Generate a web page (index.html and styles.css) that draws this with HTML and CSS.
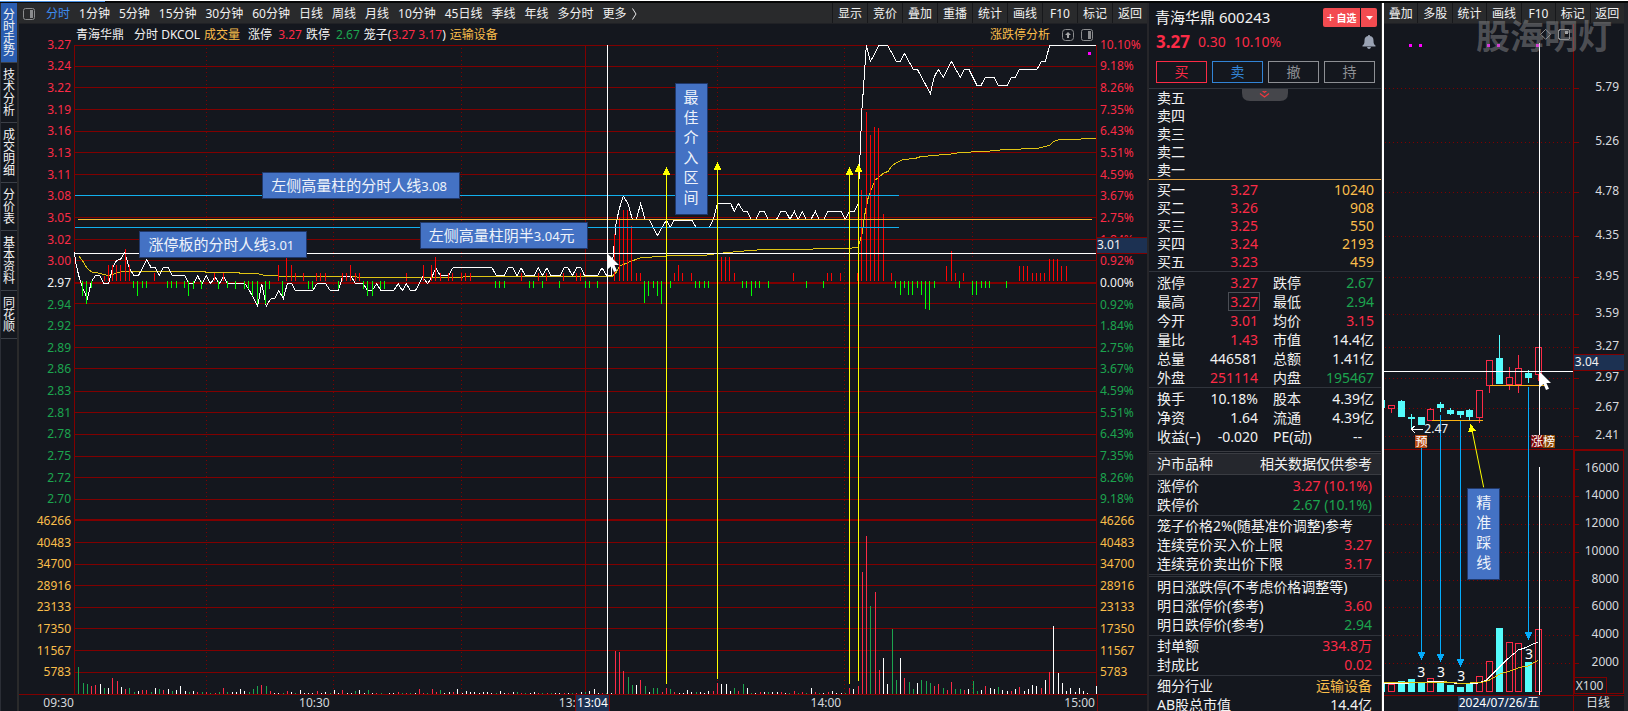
FILE: index.html
```html
<!DOCTYPE html>
<html lang="zh-CN">
<head>
<meta charset="utf-8">
<title>青海华鼎 600243 分时走势</title>
<link rel="stylesheet" href="styles.css">
</head>
<body>
<div class="top-strip"><span class="top-strip-active"></span></div>
<div class="workspace">
  <nav class="side-tabs">
    <button class="side-tab active">分时走势</button>
    <button class="side-tab">技术分析</button>
    <button class="side-tab">成交明细</button>
    <button class="side-tab">分价表</button>
    <button class="side-tab">基本资料</button>
    <button class="side-tab">同花顺</button>
  </nav>

  <main class="intraday">
    <div class="toolbar">
      <div class="periods">
        <button class="period icon-btn" aria-label="侧栏"><svg width="12" height="12" viewBox="0 0 12 12"><rect x=".5" y=".5" width="11" height="11" rx="2" fill="none" stroke="#8b8c8e"/><rect x="7" y="2" width="3" height="8" fill="#8b8c8e"/></svg></button>
        <button class="period selected">分时</button>
        <button class="period">1分钟</button>
        <button class="period">5分钟</button>
        <button class="period">15分钟</button>
        <button class="period">30分钟</button>
        <button class="period">60分钟</button>
        <button class="period">日线</button>
        <button class="period">周线</button>
        <button class="period">月线</button>
        <button class="period">10分钟</button>
        <button class="period">45日线</button>
        <button class="period">季线</button>
        <button class="period">年线</button>
        <button class="period">多分时</button>
        <button class="period more">更多<svg width="5" height="12" viewBox="0 0 5 12"><path d="M.5.5 4 6 .5 11.5" fill="none" stroke="#e8e8e8"/></svg></button>
      </div>
      <div class="tools">
        <button class="tool">显示</button><button class="tool">竞价</button><button class="tool">叠加</button><button class="tool">重播</button><button class="tool">统计</button><button class="tool">画线</button><button class="tool">F10</button><button class="tool">标记</button><button class="tool">返回</button>
      </div>
    </div>
    <div class="legend">
      <span class="legend-name">青海华鼎</span><span>分时 DKCOL</span><span class="gold legend-vol">成交量</span>
      <span>涨停</span><span class="up legend-num">3.27</span><span>跌停</span><span class="down legend-num">2.67</span>
      <span>笼子(<span class="up">3.27 3.17</span>)</span><span class="gold">运输设备</span>
      <span class="legend-right">
        <a class="gold" href="#">涨跌停分析</a>
        <svg width="12" height="12" viewBox="0 0 12 12"><rect x=".5" y=".5" width="11" height="11" rx="3" fill="none" stroke="#8b8c8e"/><path d="M6 3 9 6H7v3H5V6H3z" fill="#a5a6a8"/></svg>
        <svg width="12" height="12" viewBox="0 0 12 12"><rect x=".5" y=".5" width="11" height="11" rx="2" fill="none" stroke="#8b8c8e"/><rect x="7" y="2" width="3" height="8" fill="#8b8c8e"/></svg>
      </span>
    </div>
    <div class="chart-row">
      <div class="axis axis-left" id="axisLeft"></div>
      <div class="plot">
        <svg class="plot-svg" id="plot" viewBox="222 135 3069 1947" preserveAspectRatio="none"></svg>
        <div class="note note-high">左侧高量柱的分时人线<span class="num">3.08</span></div>
        <div class="note note-half">左侧高量柱阴半<span class="num">3.04</span>元</div>
        <div class="note note-limit">涨停板的分时人线<span class="num">3.01</span></div>
        <div class="note note-tall note-zone">最佳介入区间</div>
        <svg class="cursor cursor-main" width="12" height="18" viewBox="0 0 12 18"><path d="M0 0v15l3.5-3 2.5 6 3-1.2-2.600-5.800H11z" fill="#fff"/></svg>
      </div>
      <div class="axis axis-right" id="axisRight"><span class="marker">3.01</span></div>
    </div>
    <div class="time-axis">
      <span>09:30</span><span>10:30</span><span class="time-noon">13:00</span><span>14:00</span><span class="time-close">15:00</span><span class="time-end"></span>
      <span class="time-marker">13:04</span>
    </div>
  </main>

  <aside class="quote">
    <header class="quote-head">
      <h1 class="quote-name">青海华鼎 600243</h1>
      <div class="fav"><button class="fav-add"><span class="fav-plus">+</span>自选</button><button class="fav-menu" aria-label="自选菜单"><svg width="7" height="4" viewBox="0 0 7 4"><path d="M0 0h7L3.500 4z" fill="#fff"/></svg></button></div>
    </header>
    <div class="quote-price up"><strong>3.27</strong><span>0.30</span><span>10.10%</span>
      <svg class="bell" width="14" height="14" viewBox="0 0 14 14"><path d="M7 0c.8 0 1 .5 1 1 2.500.6 3.500 2 3.500 4.500 0 3 .5 4 2 5v1H.5v-1c1.500-1 2-2 2-5C2.500 3 3.500 1.600 6 1c0-.5.2-1 1-1zM5 12h4c-.3 1.300-1 2-2 2s-1.700-.7-2-2z" fill="#9aa3b4"/></svg>
    </div>
    <div class="trade">
      <button class="trade-btn buy">买</button><button class="trade-btn sell">卖</button><button class="trade-btn">撤</button><button class="trade-btn">持</button>
    </div>
    <div class="book asks">
      <svg class="fold" width="46" height="12" viewBox="0 0 46 12"><path d="M0 0h46v4q0 8-8 8H8Q0 12 0 4z" fill="#45464b"/><path d="M20.500 2.500h1l1 1 1-1h1M18 4.500l4.500 3.500L27 4.500" fill="none" stroke="#f0383f" stroke-width="1.200"/></svg>
      <div class="row">卖五</div><div class="row">卖四</div><div class="row">卖三</div><div class="row">卖二</div><div class="row">卖一</div>
    </div>
    <div class="book bids">
      <div class="row"><span>买一</span><span class="up">3.27</span><span></span><span class="gold">10240</span></div>
      <div class="row"><span>买二</span><span class="up">3.26</span><span></span><span class="gold">908</span></div>
      <div class="row"><span>买三</span><span class="up">3.25</span><span></span><span class="gold">550</span></div>
      <div class="row"><span>买四</span><span class="up">3.24</span><span></span><span class="gold">2193</span></div>
      <div class="row"><span>买五</span><span class="up">3.23</span><span></span><span class="gold">459</span></div>
    </div>
    <div class="stats">
      <div class="row"><span>涨停</span><span class="up">3.27</span><span>跌停</span><span class="down">2.67</span></div>
      <div class="row"><span>最高</span><span class="up"><span class="boxed">3.27</span></span><span>最低</span><span class="down">2.94</span></div>
      <div class="row"><span>今开</span><span class="up">3.01</span><span>均价</span><span class="up">3.15</span></div>
      <div class="row"><span>量比</span><span class="up">1.43</span><span>市值</span><span>14.4亿</span></div>
      <div class="row"><span>总量</span><span>446581</span><span>总额</span><span>1.41亿</span></div>
      <div class="row"><span>外盘</span><span class="up">251114</span><span>内盘</span><span class="down">195467</span></div>
    </div>
    <div class="stats stats-b">
      <div class="row"><span>换手</span><span>10.18%</span><span>股本</span><span>4.39亿</span></div>
      <div class="row"><span>净资</span><span>1.64</span><span>流通</span><span>4.39亿</span></div>
      <div class="row"><span>收益(–)</span><span>-0.020</span><span>PE(动)</span><span class="dash">--</span></div>
    </div>
    <div class="pair section-title"><span>沪市品种</span><span>相关数据仅供参考</span></div>
    <div class="group">
      <div class="pair"><span>涨停价</span><span class="up">3.27 (10.1%)</span></div>
      <div class="pair"><span>跌停价</span><span class="down">2.67 (10.1%)</span></div>
    </div>
    <div class="group tight">
      <div class="pair"><span>笼子价格2%(随基准价调整)参考</span></div>
      <div class="pair"><span>连续竞价买入价上限</span><span class="up">3.27</span></div>
      <div class="pair"><span>连续竞价卖出价下限</span><span class="up">3.17</span></div>
    </div>
    <div class="group doubled tight">
      <div class="pair"><span>明日涨跌停(不考虑价格调整等)</span></div>
      <div class="pair"><span>明日涨停价(参考)</span><span class="up">3.60</span></div>
      <div class="pair"><span>明日跌停价(参考)</span><span class="down">2.94</span></div>
    </div>
    <div class="group tight">
      <div class="pair"><span>封单额</span><span class="up">334.8万</span></div>
      <div class="pair"><span>封成比</span><span class="up">0.02</span></div>
    </div>
    <div class="group tight">
      <div class="pair"><span>细分行业</span><span class="gold">运输设备</span></div>
      <div class="pair"><span>AB股总市值</span><span>14.4亿</span></div>
    </div>
  </aside>

  <section class="daily">
    <div class="toolbar">
      <div class="tools tools-wide">
        <button class="tool">叠加</button><button class="tool">多股</button><button class="tool">统计</button><button class="tool">画线</button><button class="tool">F10</button><button class="tool">标记</button><button class="tool">返回</button>
      </div>
    </div>
    <div class="k-chart" id="kChart">
      <svg class="plot-svg" id="kPlot" viewBox="12 72 720 2013" preserveAspectRatio="none"></svg>
      <span class="k-marker">3.04</span>
      <span class="k-unit">X100</span>
      <span class="k-low">2.47</span>
      <span class="tag tag-pre">预</span>
      <span class="tag-pair"><span class="tag tag-rise">涨</span><span class="tag tag-list">榜</span></span>
      <div class="note note-tall note-line">精准踩线</div>
      <div class="watermark">股海明灯</div>
      <svg class="cursor cursor-daily" width="12" height="18" viewBox="0 0 12 18"><path d="M0 0v15l3.500-3 2.500 6 3-1.200-2.600-5.800H11z" fill="#fff"/></svg>
    </div>
    <div class="k-time"><span class="k-date">2024/07/26/五</span><span class="k-period">日线</span></div>
  </section>
</div>
<script src="charts.js"></script>
</body>
</html>
```
FILE: styles.css
```css
* { box-sizing: border-box; }
html, body { margin: 0; height: 100%; }
body {
  display: flex;
  flex-direction: column;
  background: #14171e;
  color: #f2f2f2;
  font: 12px/16px "Noto Sans", "Noto Sans CJK SC", sans-serif;
  overflow: hidden;
}
button { font: inherit; color: inherit; background: none; border: 0; padding: 0; margin: 0; white-space: nowrap; }
a { text-decoration: none; }
svg { display: block; }
.up { color: #fb2b46; }
.down { color: #1ca44e; }
.gold { color: #fabe4b; }

.top-strip { flex: none; height: 3px; background: #050606; border-top: 1px solid #fff; }
.top-strip-active { display: block; width: 105px; height: 1px; background: #4a90e2; }
.workspace { flex: 1; min-height: 0; display: flex; }

/* left tab strip */
.side-tabs { flex: none; width: 19px; display: flex; flex-direction: column; border-left: 1px solid #2b2e36; border-right: 2px solid #2a2a2b; }
.side-tab { width: 16px; padding: 6px 2px 5px; font-size: 12px; line-height: 12px; white-space: normal; word-break: break-all; border-bottom: 1px solid #3b3f47; }
.side-tab.active { background: #2a5db0; }

/* intraday */
.intraday { flex: 1; min-width: 0; display: flex; flex-direction: column; }
.toolbar { flex: none; height: 21px; display: flex; justify-content: space-between; background: #292a2c; border-bottom: 1px solid #202125; }
.periods { display: flex; align-items: center; gap: 9px; padding: 1px 0 0 4px; }
.period.selected { color: #3c8cf0; }
.period.icon-btn { margin-right: 2px; }
.period.more { display: flex; align-items: center; gap: 5px; }
.tools { display: flex; }
.tool { width: 35px; padding-top: 2px; border-left: 1px solid #17181b; }
.tools-wide { flex: 1; }
.tools-wide .tool { flex: 1; width: auto; }
.tools-wide .tool:first-child { border-left: 0; }

.legend { flex: none; height: 21px; display: flex; align-items: center; gap: 4px; padding: 0 54px 0 57px; white-space: nowrap; }
.legend-name { margin-right: 6px; }
.legend-vol { margin-right: 4px; }
.legend-num { margin-left: 2px; }
.legend-right { margin-left: auto; display: flex; align-items: center; gap: 7px; }
.legend-right a { margin-right: 5px; }

.chart-row { flex: 1; min-height: 0; display: flex; }
.axis { flex: none; display: flex; flex-direction: column; margin: -11px 0 12px; position: relative; }
.axis-left { width: 55px; text-align: right; padding-right: 3px; }
.axis-right { width: 50px; padding-left: 3px; }
.tick { flex: 1; min-height: 0; display: flex; align-items: center; }
.axis-left .tick { justify-content: flex-end; }
.flat { color: #f2f2f2; }
.marker { position: absolute; left: 0; right: 0; top: 31.300%; height: 17px; line-height: 14px; background: #1c3152; border: 1px solid #800000; border-left: 0; border-right: 0; }

.plot { flex: 1; min-width: 0; position: relative; }
.plot-svg { position: absolute; left: 0; top: 0; width: 100%; height: 100%; shape-rendering: crispEdges; }
.plot-svg * { vector-effect: non-scaling-stroke; }
.note { position: absolute; background: #4472c4; border: 1px solid #20386a; color: #eef2fa; font-size: 15px; line-height: 24px; padding: 0 12px 0 8px; white-space: nowrap; }
.num { font-size: 13px; }
.note-high { left: 18.400%; top: 19.600%; }
.note-half { left: 33.800%; top: 27.300%; }
.note-limit { left: 6.400%; top: 28.600%; }
.note-tall { width: 33px; padding: 3px 8px 7px; line-height: 20px; white-space: normal; word-break: break-all; }
.note-zone { left: 58.700%; top: 5.900%; }
.cursor { position: absolute; }
.cursor-main { left: 52.200%; top: 32.200%; }

.time-axis { flex: none; position: relative; height: 17px; line-height: 15px; display: grid; grid-template-columns: 55px repeat(4, 1fr) 50px; text-align: right; color: #d5d8dc; border-top: 1px solid #800000; margin-top: -1px; z-index: 1; }
.time-noon { margin-right: -4px; }
.time-close { padding-right: 2px; }
.time-end { border-left: 1px solid #800000; }
.time-marker { position: absolute; left: 49.300%; top: 0; padding: 0 1px; height: 17px; background: #1c3152; border-left: 1px solid #800000; border-right: 1px solid #800000; color: #fff; }

/* quote panel */
.quote { flex: none; width: 235px; border-left: 2px solid #26262a; border-right: 1px solid #333; overflow: hidden; font-size: 14px; line-height: 18px; }
.quote-head { display: flex; justify-content: space-between; padding: 5px 4px 0 6px; }
.quote-name { margin: 0; font-size: 15px; font-weight: 400; line-height: 18px; }
.fav { display: flex; gap: 1px; height: 19px; font-size: 10px; font-weight: 700; line-height: 18px; color: #fff; }
.fav-add { width: 37px; background: #f34b50; border-radius: 2px 0 0 2px; display: flex; align-items: center; justify-content: center; gap: 2px; }
.fav-plus { font-size: 14px; font-weight: 400; }
.fav-menu { width: 16px; background: #f34b50; border-radius: 0 2px 2px 0; display: flex; align-items: center; justify-content: center; }
.quote-price { display: flex; align-items: center; gap: 8px; height: 20px; margin: 5px 5px 9px 7px; }
.quote-price strong { font-size: 17px; }
.bell { margin-left: auto; }
.trade { display: flex; gap: 5px; padding: 0 6px 5px 7px; border-bottom: 1px solid #30343c; }
.trade-btn { flex: 1; height: 22px; line-height: 18px; border: 1px solid #8d8f94; color: #8d8f94; }
.trade-btn.buy { border-color: #fb2b46; color: #fb2b46; }
.trade-btn.sell { border-color: #3284d6; color: #3284d6; }
.row { display: grid; grid-template-columns: 46px 55px 42px 1fr; padding: 0 7px 0 8px; white-space: nowrap; }
.row > :nth-child(2), .row > :nth-child(4) { display: flex; justify-content: flex-end; }
.row > :nth-child(3) { margin-left: 15px; }
.asks { position: relative; height: 91px; border-bottom: 1px solid #e0a040; }
.fold { position: absolute; left: 93px; top: 0; }
.bids { padding: 1px 0 0; border-bottom: 1px solid #30343c; }
.stats { line-height: 19px; padding: 1px 0 0; border-bottom: 1px solid #30343c; }
.stats-b { padding-bottom: 5px; border-bottom: 3px double #3a3c42; }
.row > .dash { padding-right: 12px; }
.boxed { border: 1px solid #4a4d54; line-height: 17px; margin-right: -2px; padding: 0 1px; }
.pair { display: flex; justify-content: space-between; line-height: 19px; padding: 0 9px 0 8px; white-space: nowrap; }
.section-title { background: #25272d; border-bottom: 1px solid #3a3c42; line-height: 20px; }
.group { padding: 1px 0; border-bottom: 1px solid #30343c; }
.group.tight { padding: 0 0 1px; }
.group.doubled { border-top: 1px solid #30343c; margin-top: 1px; }

/* daily chart */
.daily { flex: none; width: 246px; display: flex; flex-direction: column; border-left: 2px solid #fff; border-right: 4px solid #22242a; }
.k-chart { flex: 1; min-height: 0; position: relative; }
.k-label { position: absolute; right: 5px; line-height: 16px; margin-top: -9px; color: #d8dade; }
.k-count { position: absolute; width: 12px; margin: -9px 0 0 -6px; text-align: center; font-size: 14px; line-height: 18px; color: #fff; }
.k-marker { position: absolute; left: 79.100%; right: 0; top: 49.200%; height: 17px; line-height: 14px; padding-left: 1px; background: #1c3152; border: 1px solid #800000; border-left: 0; border-right: 0; }
.k-unit { position: absolute; left: 79.500%; bottom: 1px; padding: 0 3px 0 1px; line-height: 15px; color: #d8dade; border: 1px solid #800000; border-left: 0; }
.k-low { position: absolute; left: 16.800%; top: 59.200%; }
.tag { display: block; width: 12px; height: 13px; line-height: 13px; font-size: 12px; color: #fff; }
.tag-pre { position: absolute; left: 13.100%; top: 61.300%; background: #b84c14; }
.tag-pair { position: absolute; left: 61.300%; top: 61.300%; display: flex; }
.tag-rise { background: #7c0404; }
.tag-list { background: #8a4604; }
.note-line { left: 34.700%; top: 69.100%; }
.watermark { position: absolute; right: 12px; top: -10px; font-size: 34px; line-height: 44px; font-weight: 700; color: rgba(150, 150, 152, .45); white-space: nowrap; }
.cursor-daily { left: 65%; top: 51.900%; }
.k-time { flex: none; height: 16px; display: flex; justify-content: flex-end; border-top: 1px solid #800000; }
.k-date { background: #1c3152; color: #fff; padding: 0 1px; margin-right: 33px; line-height: 14px; }
.k-period { width: 51px; border-left: 1px solid #800000; padding-left: 12px; line-height: 14px; color: #d8dade; }
```
FILE: charts.js
```js
// Both plots use three drawing units per CSS pixel at their base size.
const NS = 'http://www.w3.org/2000/svg';
function el(parent, name, attrs) {
  const node = document.createElementNS(NS, name);
  for (const key in attrs) node.setAttribute(key, attrs[key]);
  parent.appendChild(node);
  return node;
}
const line = (p, x1, y1, x2, y2, stroke, extra) => el(p, 'line', { x1, y1, x2, y2, stroke, ...extra });
const poly = (p, points, stroke) => el(p, 'polyline', { points, stroke, fill: 'none' });
const rect = (p, x, y, width, height, fill) => el(p, 'rect', { x, y, width, height, fill });

const RED = '#fb2b46', GREEN = '#1ca44e', GRID = '#800000', CYAN = '#54fcfc', BLUE = '#12b0ee', GOLD = '#fab414';

// ---- price and volume axes
const prices = '3.27 3.24 3.22 3.19 3.16 3.13 3.11 3.08 3.05 3.02 3.00 2.97 2.94 2.92 2.89 2.86 2.83 2.81 2.78 2.75 2.72 2.70'.split(' ');
const percents = '10.10 9.18 8.26 7.35 6.43 5.51 4.59 3.67 2.75 1.84 0.92 0.00 0.92 1.84 2.75 3.67 4.59 5.51 6.43 7.35 8.26 9.18'.split(' ');
const volumes = '46266 40483 34700 28916 23133 17350 11567 5783'.split(' ');
function fillAxis(id, values) {
  const axis = document.getElementById(id);
  values.concat(volumes).forEach((text, i) => {
    const tick = document.createElement('span');
    tick.className = 'tick ' + (i > 21 ? 'gold' : i < 11 ? 'up' : i > 11 ? 'down' : 'flat');
    tick.textContent = text;
    axis.insertBefore(tick, axis.querySelector('.marker'));
  });
}
fillAxis('axisLeft', prices);
fillAxis('axisRight', percents.map(p => p + '%'));

// ---- intraday plot
const plot = document.getElementById('plot');
for (let i = 0; i <= 29; i++) {
  const y = 136.500 + Math.max(0, Math.floor(i * 21.600 - .25)) * 3;
  line(plot, 222, y, 3291, y, GRID, { 'stroke-width': i === 11 || i === 22 ? 2 : 1 });
}
for (const x of [619.5, 1000.5, 1384.5, 2152.5, 2533.5, 2917.5]) {
  line(plot, x, 144, x, 2079, GRID, { 'stroke-dasharray': '1 3' });
}
for (const x of [223.5, 1756.5, 3289.5]) line(plot, x, 136, x, 2082, GRID);

// Each block of the session is recorded relative to its own left edge.
const sessions = [
  {
    x: 0,
    price: '223,754 228,790 236,825 247,860 262,895 274,845 286,826 300,826 312,850 326,850 338,800 350,780 362,776 374,757 388,803 402,826 415,826 428,802 440,778 453,801 467,803 478,826 490,802 505,802 517,826 555,826 567,850 580,850 593,827 606,850 619,827 632,850 645,830 658,850 671,828 683,850 735,850 747,868 760,892 773,918 785,850 799,918 811,896 824,894 836,870 850,894 862,850 875,850 886,871 938,871 951,850 977,850 991,871 1015,871 1028,827 1053,827 1066,850 1090,850 1103,871 1116,871 1130,850 1143,871 1180,871 1195,850 1207,871 1219,850 1232,871 1246,871 1258,850',
    average: '236,766 250,785 262,805 275,815 300,819 326,826 345,820 360,815 405,814 432,812 615,812 617,815 717,815 719,818 767,818 795,826 833,826 835,829 1066,829 1080,832 1200,832',
    flow: '312:826 326:795 338:795 350:795 362:795 376:747 388:795 464:819 643:819 670:819 836:795 860:771 875:795 887:819 911:819 950:819 962:819 977:819 1028:819 1040:819 1052:795 1067:819 1079:819 1220:819 248:888 260:912 274:863 401:863 413:888 428:863 440:863 503:863 515:863 530:863 554:863 566:888 581:866 605:866 656:866 683:863 707:866 734:866 745:866 758:888 773:912 797:912 809:866 848:888 926:866 938:866 1016:866 1091:866 1103:888 1118:888 1142:866 1154:866',
    volume: '235g81 250g33 262g30 274r24 286r27 301w30 313g18 325w18 337r48 352r39 364w21 376r15 388g18 403g6 415w9 427r12 440r12 454g6 466w18 478g15 490r12 505w15 517g9 529w12 541w24 556w9 568g6 580w9 592r6 607g6 619r6 631g3 646r3 658g6 670r18 682g6 697w6 709w6 721w15 733w9 748g6 760g15 772g24 784r27 799g24 811r9 823w3 835w3 850g3 862r9 874w6 886g3 901w12 913w3 925w3 937w3 952r9 964w3 976w6 991g3 1003w12 1015w3 1027r12 1042w3 1054w3 1066g9 1078w12 1093w3 1105g12 1117w3 1130r3 1144g3 1168w3 1180w3 1195r6'
  },
  {
    x: 1200,
    price: '58,850 68,830 83,850 96,830 107,803 121,826 145,826 159,802 276,802 289,826 312,826 325,802 338,802 351,826 363,802 376,826 402,826 415,802 428,826 441,802 453,826 480,826 492,802 504,802 517,826 530,802 542,802 554,826 593,826 606,802 620,826 633,826 640,760 648,670 658,625 670,588 684,610 697,657 709,657 722,610 735,657 748,657 772,706 799,660 811,681 822,660 876,660 888,681 928,681 940,658 952,610 992,610 1003,633 1015,610 1030,633 1042,633 1054,657 1068,657 1080,633 1093,633 1105,657 1130,657 1143,633 1157,633 1170,657 1183,633 1195,657 1207,633',
    average: '0,832 185,832 192,829 635,829 648,817 660,797 685,786 720,773 770,769 800,767 905,766 950,760 1020,753 1085,748 1200,748',
    flow: '70:795 95:795 107:771 121:819 146:819 158:819 184:819 196:819 211:819 364:819 415:819 440:819 490:819 529:819 541:819 643:700 658:654 670:630 682:630 694:678 709:819 721:819 823:819 835:795 847:819 874:819 965:771 977:771 989:771 1003:819 1180:819 286:863 298:863 313:863 388:863 400:863 427:863 478:863 556:863 568:863 592:863 733:909 745:888 760:863 772:888 784:912 811:863 886:863 898:863 913:863 925:863 1027:863 1039:863 1054:888 1066:863 1078:863 1105:863',
    volume: '7g3 19r3 31g3 46w3 58r15 70r3 82g3 97r15 109r6 121g12 133w3 148w6 160r6 172w15 187w3 199w9 211w6 223w6 238w3 250w6 262w6 274w3 289g3 301w9 313w3 325r3 340w6 352g6 364r3 376g3 391w3 403w6 415r3 427g3 442r3 454g3 466w3 478w3 493r3 505w3 517g3 529r3 544w6 556g6 568w9 583w15 595w3 607r3 619g3 634w3 646r129 658r126 670r69 685g51 697g27 709w27 721r42 736g24 748w6 760g18 772g18 787r6 799r18 811g15 823r6 838w3 850w3 862w12 874w6 889g6 901w6 913w3 925w9 940r9 952r33 964w30 979w30 991w9 1003g18 1015r9 1030g30 1042w18 1054g3 1066w3 1081r6 1093w6 1105g6 1117w6 1132w6 1144r6 1156w3 1168g3 1183r9 1195g3'
  },
  {
    x: 2400,
    price: '7,633 18,657 33,657 46,633 57,657 72,657 83,633 124,633 136,657 149,633 163,633 174,612 181,440 186,325 190,270 199,136 211,184 224,162 237,136 263,136 289,184 301,184 313,160 340,208 352,208 378,256 391,280 403,230 415,208 430,232 454,184 481,232 493,208 507,208 531,256 543,256 556,232 583,232 595,256 622,256 634,232 646,232 658,208 711,208 724,184 736,184 749,136 888,136',
    average: '0,748 38,748 40,745 150,745 160,742 174,742 186,700 195,640 205,590 225,540 240,528 252,518 264,514 277,495 308,478 345,475 360,470 410,465 445,463 475,458 520,455 565,453 615,448 680,446 715,444 748,436 760,424 780,418 830,417 888,415',
    flow: '82:819 94:819 121:819 172:819 184:568 199:336 211:405 223:381 235:384 250:642 274:819 439:798 454:753 466:819 490:819 658:798 670:798 682:798 697:819 709:819 721:819 733:819 748:777 760:777 772:777 785:798 799:798 19:863 70:863 286:863 301:885 313:863 325:885 337:885 352:863 364:885 376:927 388:930 403:863 478:863 517:885 529:885 544:863 556:863 568:863 619:863',
    volume: '7r6 19g3 34w18 46r6 58g3 70w3 85r6 97w9 109w3 124w3 136g3 148r18 160w15 175r24 187r366 199r474 211g264 226r306 238r72 250w108 262w30 277g195 289g42 301w108 313r48 328g36 340g15 352w33 364g42 379g39 391g33 403r24 415r30 430g18 442r12 454r36 466g15 481g15 493r12 505w15 520g39 532g9 544w12 556r24 571w18 583w15 595g21 607w12 622w9 634r9 646w15 658r21 673w9 685w15 697w27 709w24 724r18 736w42 748r66 760w204 775w63 787w33 799w9 811w18 826w6 838w18 850w9 862w3 889w24'
  }
];
const ink = { r: RED, g: GREEN, w: '#ffffff' };
const snap = x => Math.floor(x / 3) * 3;
for (const s of sessions) {
  const g = el(plot, 'g', { transform: `translate(${s.x} 0)` });
  poly(g, s.average, '#e0c414');
  poly(g, s.price, '#ffffff');
  for (const item of s.flow.split(' ')) {
    const [x, y] = item.split(':').map(Number);
    rect(g, snap(x), Math.min(y, 843), 3, Math.abs(y - 843), y < 843 ? '#fc0404' : '#04fc04');
  }
  for (const item of s.volume.split(' ')) {
    const [, x, c, h] = item.match(/(\d+)([rgw])(\d+)/);
    rect(g, snap(+x), 2079 - h, 3, h, ink[c]);
  }
}
line(plot, 226, 586.500, 2698, 586.500, BLUE);
line(plot, 226, 682.500, 2698, 682.500, BLUE);
line(plot, 235, 658.500, 3275, 658.500, '#fabe32');
line(plot, 222, 760.500, 3288, 760.500, '#ffffff');
line(plot, 1822.500, 135, 1822.500, 2079, '#ffffff');
for (const [x, top, bottom] of [[1999.5, 500, 2050], [2152.5, 485, 2034], [2548.5, 500, 2050], [2575.5, 491, 2040]]) {
  line(plot, x, top + 20, x, bottom, '#ffff00');
  el(plot, 'polygon', { points: `${x},${top} ${x + 12},${top + 25} ${x - 12},${top + 25}`, fill: '#ffff00' });
}
rect(plot, 3264, 156, 9, 9, '#ff00ff');

// ---- daily plot
const k = document.getElementById('kPlot');
const host = document.getElementById('kChart');
const place = (cls, text, x, y) => {
  const node = document.createElement('span');
  node.className = cls;
  node.textContent = text;
  node.style.top = ((y - 72) / 2013 * 100) + '%';
  if (x !== null) node.style.left = ((x - 12) / 720 * 100) + '%';
  host.appendChild(node);
};
const levels = [[265, '5.79'], [427, '5.26'], [577, '4.78'], [709, '4.35'], [832, '3.95'], [943, '3.59'], [1042, '3.27'], [1135, '2.97'], [1225, '2.67'], [1309, '2.41'],
  [1408, '16000'], [1489, '14000'], [1573, '12000'], [1657, '10000'], [1741, '8000'], [1822, '6000'], [1906, '4000'], [1990, '2000']];
for (const [y, text] of levels) {
  const ly = snap(y) + 1.500;
  if (text !== '16000') line(k, 15, ly, 580, ly, GRID, { 'stroke-dasharray': '1 3' });
  line(k, 582, ly, 597, ly, GRID);
  place('k-label', text, null, y);
}
line(k, 580.500, 72, 580.500, 2085, GRID);
line(k, 12, 1348.500, 732, 1348.500, GRID);
el(k, 'rect', { x: 583.500, y: 1351.500, width: 147, height: 730, fill: 'none', stroke: GRID });

// center, body top, body bottom, high, low, color, volume top
const candles = [
  [5, 1200, 1223, 1200, 1223, 'c', 2048], [35, 1216, 1226, 1216, 1238, 'r', 2053], [65, 1203, 1251, 1200, 1251, 'c', 2042],
  [95, 1251, 1256, 1242, 1285, 'c', 2036], [124, 1251, 1275, 1251, 1275, 'c', 2048], [151, 1228, 1261, 1224, 1261, 'r', 2035],
  [181, 1213, 1223, 1206, 1236, 'c', 2048], [211, 1230, 1241, 1225, 1245, 'c', 2055], [241, 1233, 1244, 1233, 1253, 'c', 2061],
  [269, 1230, 1250, 1227, 1259, 'c', 2051], [298, 1171, 1252, 1171, 1268, 'r', 2029], [328, 1081, 1156, 1081, 1179, 'r', 1984],
  [358, 1074, 1151, 1005, 1151, 'c', 1884], [388, 1132, 1153, 1101, 1171, 'r', 1927], [415, 1105, 1153, 1065, 1179, 'r', 1930],
  [445, 1119, 1134, 1110, 1148, 'c', 1986], [475, 1042, 1123, 1042, 1142, 'r', 1888]
];
for (const [x, top, bottom, high, low, c, vol] of candles) {
  const color = c === 'c' ? CYAN : RED;
  const cx = snap(x) + 1.500;
  if (high < top) line(k, cx, high, cx, top, color);
  if (low > bottom) line(k, cx, bottom, cx, low, color);
  if (c === 'c') {
    rect(k, cx - 10.500, top, 21, bottom - top, color);
    rect(k, cx - 10.500, vol, 21, 2075 - vol, color);
  } else {
    el(k, 'rect', { x: cx - 9, y: top, width: 18, height: bottom - top, fill: '#14171e', stroke: color });
    el(k, 'rect', { x: cx - 9, y: vol, width: 18, height: 2074 - vol, fill: 'none', stroke: color });
  }
}
line(k, 155, 1261.500, 308, 1261.500, GOLD);
line(k, 330, 1156.500, 500, 1156.500, GOLD);
poly(k, '12,2050 75,2050 110,2047 140,2046 175,2043 200,2046 230,2050 290,2050 320,2040 340,2020 360,2000 385,1975 415,1950 440,1942 460,1932 475,1926', '#ffffff');
poly(k, '12,2047 200,2046 240,2050 300,2048 325,2042 360,2022 400,2010 420,2002 445,1998 475,1980', '#e0c414');
line(k, 12, 1114.500, 580, 1114.500, '#ffffff');
line(k, 478.500, 128, 478.500, 1345, '#ffffff');
line(k, 478.500, 1400, 478.500, 2085, '#ffffff');
for (const [x, from, tip] of [[124.5, 1305, 1980], [181.5, 1246, 1985], [241.5, 1263, 2002], [445.5, 1160, 1920]]) {
  line(k, x, from, x, tip - 20, '#04acfc');
  el(k, 'polygon', { points: `${x - 12},${tip - 24} ${x + 12},${tip - 24} ${x},${tip}`, fill: '#04acfc' });
}
poly(k, '104,1277 94,1288 104,1298', '#ffffff');
line(k, 94, 1288.500, 130, 1288.500, '#ffffff');
line(k, 311, 1462, 276, 1290, '#ffff00', { 'shape-rendering': 'auto' });
el(k, 'polygon', { points: '272,1272 288,1293 264,1297', fill: '#ffff00' });
for (const x of [87, 117, 321, 351, 468]) rect(k, x, 132, 9, 9, '#ff00ff');
el(k, 'path', { d: 'M497 88 512 103 497 118 482 103z', fill: 'none', stroke: '#8b8c8e', 'shape-rendering': 'auto' });
el(k, 'rect', { x: 536.500, y: 88.500, width: 33, height: 30, rx: 6, fill: 'none', stroke: '#8b8c8e' });
el(k, 'rect', { x: 555, y: 94, width: 9, height: 9, fill: '#a5a6a8' });
for (const [x, y] of [[124, 2017], [183, 2017], [244, 2027], [447, 1963]]) place('k-count', '3', x, y);
```
